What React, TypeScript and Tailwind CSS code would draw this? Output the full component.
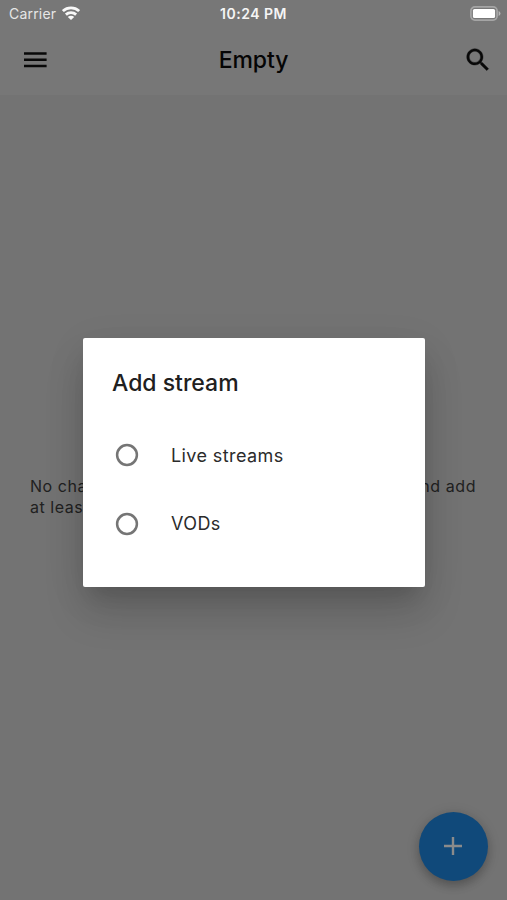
import React from 'react';

const OPTIONS = ['Live streams', 'VODs'];

const StatusBar: React.FC = () => {
  return <div className="h-[27px] flex items-center justify-between pl-[7px] pr-[7px] text-white">
      <div className="flex-1 flex items-center gap-[6px] pl-[2px]">
        <span className="text-[14px] leading-none tracking-[0.2px] text-[#e6e6e6]">Carrier</span>
        <svg className="mb-[1px]" width="18" height="14" viewBox="0 0 18 14" fill="none" stroke="#f8f8f8" strokeWidth="2.8">
          <path d="M0.9 5.1C5.4 0.9 12.6 0.9 17.1 5.1" />
          <path d="M3.9 8.6C6.7 6 11.3 6 14.1 8.6" />
          <path d="M9 14L5.8 10.9C7.5 9.3 10.5 9.3 12.2 10.9Z" fill="#f8f8f8" stroke="none" />
        </svg>
      </div>
      <span className="mr-[2px] text-[14px] leading-none font-semibold tracking-[0.5px] text-[#f5f5f5]">10:24 PM</span>
      <div className="flex-1 flex justify-end">
        <svg className="-mr-px" width="31" height="15" viewBox="0 0 31 15">
          <rect x="0.9" y="0.9" width="26.2" height="13.2" rx="4" fill="none" stroke="#a5a5a5" strokeWidth="1.7" />
          <rect x="2.9" y="2.9" width="22.2" height="9.2" rx="1.6" fill="#fff" />
          <path d="M28.6 5Q30.5 5.8 30.5 7.5Q30.5 9.2 28.6 10Z" fill="#b5b5b5" />
        </svg>
      </div>
    </div>;
};

const Toolbar: React.FC = () => {
  return <div className="h-[66px] flex items-center justify-between px-[15px] text-black">
      <div className="flex-1 flex">
        <button className="ml-[9px]">
          <svg width="23" height="16" viewBox="0 0 23 16" fill="#080808">
            <path d="M0 0.2h22.6v2.5H0zM0 6.5h22.6V9H0zM0 12.7h22.6v2.5H0z" />
          </svg>
        </button>
      </div>
      <h1 className="text-[23px] leading-none font-medium tracking-[-0.1px] text-[#050505]">Empty</h1>
      <div className="flex-1 flex justify-end">
        <button className="-mr-px">
          <svg width="30" height="30" viewBox="0 0 24 24" fill="#080808" stroke="#080808" strokeWidth="0.3">
            <path d="M15.5 14h-.79l-.28-.27C15.41 12.59 16 11.11 16 9.5 16 5.91 13.09 3 9.5 3S3 5.91 3 9.5 5.91 16 9.5 16c1.61 0 3.09-.59 4.23-1.57l.27.28v.79l5 4.99L20.49 19l-4.99-5zm-6 0C7.01 14 5 11.99 5 9.5S7.01 5 9.5 5 14 7.01 14 9.5 11.99 14 9.5 14z" />
          </svg>
        </button>
      </div>
    </div>;
};

export default function App() {
  return <div className="relative w-full h-[900px] overflow-hidden bg-[#737373] font-['Inter',sans-serif]">
      <header className="h-[95px] bg-[#777777]">
        <StatusBar />
        <Toolbar />
      </header>

      {/* Empty state, partly covered by the dialog */}
      <div className="mt-[381px] px-[30px] text-[16px] leading-[21px] tracking-[0.55px] text-[#212121]">
        <div className="flex justify-between">
          <span>No channels</span>
          <span className="mr-[1px]">and add</span>
        </div>
        <p>at least one</p>
      </div>

      <button className="absolute left-[419px] top-[812px] size-[69px] rounded-full bg-[#10497a] flex items-center justify-center shadow-[0_5px_8px_rgba(0,0,0,0.18),0_2px_14px_rgba(0,0,0,0.14)]">
        <svg className="mb-[1px] mr-[1px]" width="18" height="18" viewBox="0 0 18 18" fill="#8b8b8b">
          <path d="M7.8 0h2.4v7.8H18v2.4h-7.8V18H7.8v-7.8H0V7.8h7.8z" />
        </svg>
      </button>

      {/* Add stream dialog */}
      <div className="absolute left-[83px] top-[338px] w-[342px] h-[249px] rounded-[2px] bg-white pt-[28px] pl-[29px] shadow-[0_14px_18px_-9px_rgba(0,0,0,0.1),0_26px_40px_0px_rgba(0,0,0,0.14),0_9px_40px_0px_rgba(0,0,0,0.08)]">
        <h2 className="text-[23px] leading-[34px] font-medium tracking-[0px] text-[#202020]">Add stream</h2>
        <div className="mt-[21px] flex flex-col">
          {OPTIONS.map(option => <label key={option} className="h-[68.5px] flex items-center gap-[32px] pl-[3px]">
              <svg width="24" height="24" viewBox="0 0 24 24" fill="none" stroke="#757575" strokeWidth="2.5">
                <circle cx="12" cy="12" r="9.9" />
              </svg>
              <span className="pt-px text-[18px] leading-none tracking-[0.4px] text-[#2b2b2b]">{option}</span>
            </label>)}
        </div>
      </div>
    </div>;
}
